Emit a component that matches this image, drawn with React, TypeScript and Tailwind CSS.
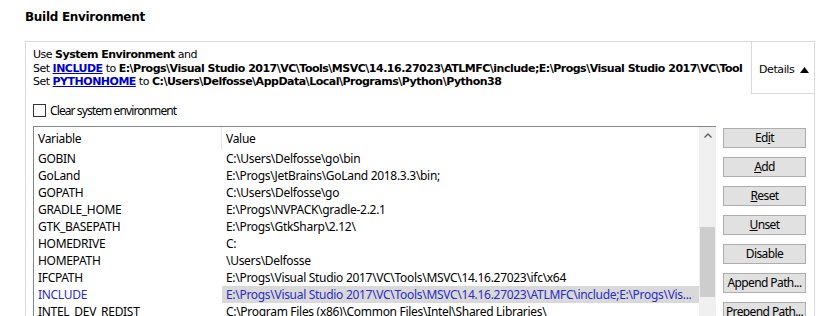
import React from 'react'

const rows: [string, string][] = [
  ['GOBIN', 'C:\\Users\\Delfosse\\go\\bin'],
  ['GoLand', 'E:\\Progs\\JetBrains\\GoLand 2018.3.3\\bin;'],
  ['GOPATH', 'C:\\Users\\Delfosse\\go'],
  ['GRADLE_HOME', 'E:\\Progs\\NVPACK\\gradle-2.2.1'],
  ['GTK_BASEPATH', 'E:\\Progs\\GtkSharp\\2.12\\'],
  ['HOMEDRIVE', 'C:'],
  ['HOMEPATH', '\\Users\\Delfosse'],
  ['IFCPATH', 'E:\\Progs\\Visual Studio 2017\\VC\\Tools\\MSVC\\14.16.27023\\ifc\\x64'],
  ['INCLUDE', 'E:\\Progs\\Visual Studio 2017\\VC\\Tools\\MSVC\\14.16.27023\\ATLMFC\\include;E:\\Progs\\Vis...'],
  ['INTEL_DEV_REDIST', 'C:\\Program Files (x86)\\Common Files\\Intel\\Shared Libraries\\'],
]

function Btn({ children }: { children: React.ReactNode }) {
  return (
    <div className="h-[20px] w-[83px] border border-[#adadad] bg-[#e1e1e1] flex items-center justify-center text-[12px] tracking-[-0.6px] text-black whitespace-nowrap overflow-hidden">
      {children}
    </div>
  )
}

export default function App() {
  const tahoma = { fontFamily: '"DejaVu Sans", sans-serif' }
  return (
    <div className="w-[840px] h-[316px] overflow-hidden bg-white text-black" style={{ fontFamily: '"Noto Sans", sans-serif' }}>
      <div className="pl-[25px] pt-[8px] h-[41px] text-[12px] font-bold tracking-[-0.3px]" style={tahoma}>
        Build Environment
      </div>

      <div className="ml-[25px] w-[790px] h-[275px] border border-b-0 border-[#d9d9d9]">
        <div className="flex h-[52px]">
          <div className="flex-1 min-w-0 overflow-hidden pl-[7px] pt-[6px] text-[11px] leading-[13.5px] whitespace-nowrap tracking-[-0.5px]" style={tahoma}>
            <div>Use <b>System Environment</b> and</div>
            <div>
              Set <b className="text-[#0000cc] underline">INCLUDE</b> to{' '}
              <b>E:\Progs\Visual Studio 2017\VC\Tools\MSVC\14.16.27023\ATLMFC\include;E:\Progs\Visual Studio 2017\VC\Tool</b>
            </div>
            <div>
              Set <b className="text-[#0000cc] underline">PYTHONHOME</b> to{' '}
              <b>C:\Users\Delfosse\AppData\Local\Programs\Python\Python38</b>
            </div>
          </div>
          <div className="w-[63px] h-[52px] shrink-0 border-l border-b border-[#d9d9d9] flex items-center pl-[7px] pt-[5px] gap-[6px] text-[11px] tracking-[-0.4px]" style={tahoma}>
            <span>Details</span>
            <svg width="9" height="6" viewBox="0 0 9 6">
              <path d="M0 6 L4.5 0 L9 6 Z" fill="#000" />
            </svg>
          </div>
        </div>

        <div className="flex items-center h-[32px] pl-[7px] pt-[1px] gap-[4px] text-[12px] tracking-[-0.9px]">
          <div className="w-[13px] h-[13px] border border-[#333] bg-white" />
          <span>Clear system environment</span>
        </div>

        <div className="flex ml-[7px]">
          <div className="w-[683px] h-[200px] shrink-0 border-l border-t border-[#828790] flex overflow-hidden">
            <div className="flex-1 min-w-0 text-[12px] tracking-[-0.3px]">
              <div className="flex h-[23px] items-center">
                <div className="w-[188px] shrink-0 pl-[4px] border-r border-[#e5e5e5] h-full flex items-center">Variable</div>
                <div className="pl-[4px]">Value</div>
              </div>
              {rows.map(([k, v]) => {
                const sel = k === 'INCLUDE'
                return (
                  <div key={k} className={`flex h-[17px] items-center whitespace-nowrap ${sel ? 'text-[#2b2bc8]' : ''}`}>
                    <div className="w-[188px] shrink-0 pl-[4px]">{k}</div>
                    <div className={`flex-1 min-w-0 overflow-hidden h-full flex items-center pl-[4px] ${sel ? 'bg-[#d9d9d9]' : ''}`}>{v}</div>
                  </div>
                )
              })}
            </div>
            <div className="w-[17px] shrink-0 bg-[#f0f0f0] flex flex-col">
              <div className="h-[17px] flex items-center justify-center">
                <svg width="8" height="5" viewBox="0 0 8 5">
                  <path d="M0.5 4.5 L4 1 L7.5 4.5" stroke="#606060" strokeWidth="1.4" fill="none" />
                </svg>
              </div>
              <div className="h-[83px]" />
              <div className="mx-[1px] h-[70px] bg-[#cdcdcd]" />
            </div>
          </div>

          <div className="ml-[7px] flex flex-col gap-[9px] pt-[2px]">
            <Btn>Ed<span className="underline">i</span>t</Btn>
            <Btn><span className="underline">A</span>dd</Btn>
            <Btn><span className="underline">R</span>eset</Btn>
            <Btn><span className="underline">U</span>nset</Btn>
            <Btn>Disable</Btn>
            <Btn>Append Path...</Btn>
            <Btn>Prepend Path...</Btn>
          </div>
        </div>
      </div>
    </div>
  )
}
